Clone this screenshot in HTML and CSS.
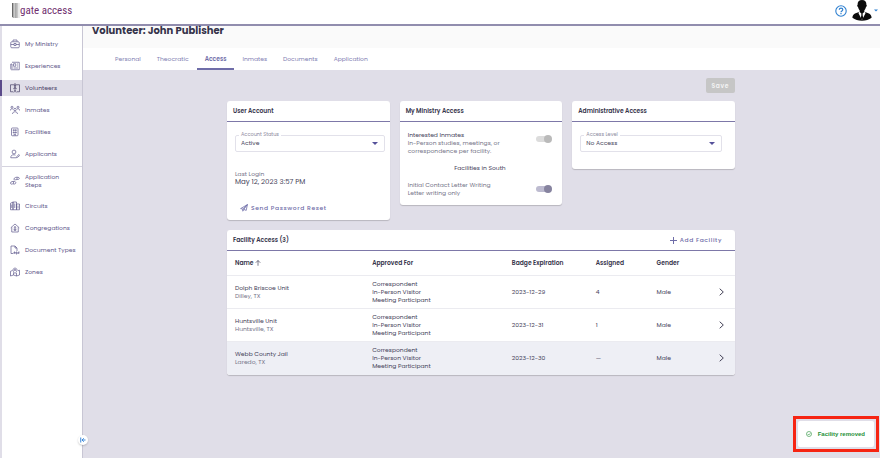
FILE: index.html
```html
<!DOCTYPE html>
<html lang="en">
<head>
<meta charset="utf-8">
<meta name="viewport" content="width=device-width, initial-scale=1">
<title>Gate Access – Volunteer</title>
<link rel="stylesheet" href="styles.css">
</head>
<body>
<header class="topbar">
  <a class="brand" href="#">
    <svg class="brand-bars" viewBox="0 0 9 17" aria-hidden="true">
      <path fill="#555" d="M0 0h1v16H0z"/><path fill="#888" d="M1.500 0h.8v17h-.8z"/><path fill="#666" d="M3 0h1v17H3z"/><path fill="#999" d="M4.500 0h.8v17h-.8z"/><path fill="#aaa" d="M6 0h.9v17H6z"/><path fill="#ccc" d="M7.500 0h.8v17h-.8z"/>
    </svg>
    <span class="brand-name">gate access</span>
  </a>
  <div class="account">
    <button class="plain" type="button" aria-label="Help">
      <svg class="help-icon" viewBox="0 0 12 12" fill="none" stroke="#2f80d0"><circle cx="6" cy="6" r="5.2" stroke-width="1.1"/><path stroke-width="1.2" d="M4.300 4.800C4.300 2.600 7.800 2.700 7.800 4.700 7.800 5.900 6 5.900 6 7.200M6 8.100v1.200"/></svg>
    </button>
    <button class="plain user" type="button" aria-label="Account menu">
      <svg class="avatar" viewBox="0 0 20 21"><path fill="#0b0b0b" d="M10 0c3 0 4.600 2 4.400 4.800.7.200.5 2-.4 2.300-.4 1.600-1 2.700-1.700 3.400v1.200l4.700 1.900c1.600.7 2.600 2.400 2.600 4.200-2.600 2-5.800 2.900-9.600 2.900s-7-.9-9.600-2.900c0-1.800 1-3.500 2.600-4.200l4.700-1.900v-1.200C7 9.800 6.400 8.700 6 7.100c-.9-.3-1.100-2.100-.4-2.300C5.400 2 7 0 10 0z"/><path fill="#fff" d="M7.400 11.800 10 14l2.600-2.200 1 1.100L10 20l-3.600-7.100z"/><path fill="#0b0b0b" d="M9.200 13.600h1.600l-.2 1.300.6 3.200L10 20l-1.200-1.900.6-3.200z"/></svg>
      <svg class="user-caret" viewBox="0 0 4 3"><path fill="#2f80d0" d="M0 .4h4L2 2.600z"/></svg>
    </button>
  </div>
</header>

<div class="shell">
  <nav class="sidebar" aria-label="Main">
    <ul class="nav-group">
      <li><a class="nav-link" href="#"><svg class="nav-icon" viewBox="0 0 20 20"><rect x="1.500" y="5.500" width="17" height="12" rx="2"/><path d="M6 5V2h8v3M1.500 11H8m4 0h6.500M8 9h4v4H8z"/></svg>My Ministry</a></li>
      <li><a class="nav-link" href="#"><svg class="nav-icon" viewBox="0 0 20 20"><path d="M4 2.500h14.500v15H3c-1 0-1.500-1-1.500-2V6H4v10M7 5.500h4.500v5H7zM14 6h2m-2 4h2m-9 4h9"/></svg>Experiences</a></li>
      <li><a class="nav-link active" aria-current="page" href="#"><svg class="nav-icon" viewBox="0 0 20 20"><path d="M7 3.500H1v14h5m7-14h6v14h-5M8 2h4v3H8z"/><circle cx="10" cy="8" r="1.500"/><path d="M6.500 11.500 10 10l3.500 1.500M10 10v4l-2.500 5m2.500-5 2.500 5"/></svg>Volunteers</a></li>
      <li><a class="nav-link" href="#"><svg class="nav-icon" viewBox="0 0 20 20"><circle cx="10" cy="9" r="2.500"/><circle cx="4" cy="4.500" r="2"/><circle cx="16" cy="4.500" r="2"/><path d="M5 18c0-6 10-6 10 0M.7 11c0-3 2-4 5-3M19.300 11c0-3-2-4-5-3"/></svg>Inmates</a></li>
      <li><a class="nav-link" href="#"><svg class="nav-icon" viewBox="0 0 20 20"><rect x="3" y="2" width="13" height="15.500" rx="1.500"/><path d="M6.500 5.500h2v2h-2zm4 0h2v2h-2zm-4 4.500h2v2h-2zm4 0h2v2h-2zM8 17v-2.500h3V17"/></svg>Facilities</a></li>
      <li><a class="nav-link" href="#"><svg class="nav-icon" viewBox="0 0 20 20"><circle cx="8" cy="6" r="3.800"/><path d="M12 17.500H1.500c0-4 2-6 6.500-6l3 .8M13 17.500l.5-2.500 4.500-4 1.500 1.800-4.500 4z"/></svg>Applicants</a></li>
    </ul>
    <ul class="nav-group">
      <li><a class="nav-link tall" href="#"><svg class="nav-icon" viewBox="0 0 20 20"><path d="M8 6c0-3 5-4 8-3.500s3.500 3 1.500 4C15 7.500 13 6.500 11 7.500S8 8 8 6zM14 2.500v4M1 14c0-3 5-3.500 8-3s3.500 3 1.500 4.500S6 15 4 16s-3-.5-3-2zM7 11v4.500"/></svg>Application Steps</a></li>
      <li><a class="nav-link" href="#"><svg class="nav-icon" viewBox="0 0 20 20"><path d="M1 4.500 6 2v15.500H1zM6 2h7v15.500H6zm7 4h6v11.500h-6zM9.500 5v9M3.500 7v7M16 9v6"/></svg>Circuits</a></li>
      <li><a class="nav-link" href="#"><svg class="nav-icon" viewBox="0 0 20 20"><path d="M1.500 9.500 10 2l8.500 7.500M3.500 8.500V18h13V8.500"/><circle cx="10" cy="8.500" r="1.500"/><path d="M7 12.500h6M10 10.500v3L8 16m2-2.500 2 2.500"/></svg>Congregations</a></li>
      <li><a class="nav-link" href="#"><svg class="nav-icon" viewBox="0 0 20 20"><path d="M6 17H2V2h8l4 4v6M10 2v4h4M8 18v-4h2v2H8m4-2v4h2v-4zm7 0h-2.500v4m0-2H19"/></svg>Document Types</a></li>
      <li><a class="nav-link" href="#"><svg class="nav-icon" viewBox="0 0 20 20"><path d="M5 7 1 8.500V18l6-2 6 2 6-2V6.500l-3 1M7 11v5m6-4v6"/><path d="M10 13C7 9.500 6 8 6 6c0-5 8-5 8 0 0 2-1 3.500-4 7z"/><circle cx="10" cy="6" r="1.300"/></svg>Zones</a></li>
    </ul>
    <button class="collapse" type="button" aria-label="Collapse sidebar">
      <svg class="collapse-icon" viewBox="0 0 12 12" fill="none" stroke="#3a86d8" stroke-width="2"><path d="M1.500 1v10M11 6H4.500M7.500 2.500 4 6l3.500 3.500"/></svg>
    </button>
  </nav>

  <main class="main">
    <h1 class="page-title">Volunteer: John Publisher</h1>
    <nav class="tabs" aria-label="Volunteer sections">
      <a class="tab" href="#">Personal</a>
      <a class="tab" href="#">Theocratic</a>
      <a class="tab current" aria-current="page" href="#">Access</a>
      <a class="tab" href="#">Inmates</a>
      <a class="tab" href="#">Documents</a>
      <a class="tab" href="#">Application</a>
    </nav>

    <div class="content">
      <div class="actions"><button class="save" type="button" disabled>Save</button></div>

      <div class="cards">
        <section class="card">
          <h2 class="card-head">User Account</h2>
          <div class="card-body account-body">
            <div class="field">
              <label class="field-label" for="status">Account Status</label>
              <select class="select" id="status"><option>Active</option><option>Inactive</option></select>
              <svg class="select-caret" viewBox="0 0 6 3" aria-hidden="true"><path d="M0 0h6L3 3z"/></svg>
            </div>
            <div class="login">
              <div class="muted">Last Login</div>
              <div class="login-time">May 12, 2023 3:57 PM</div>
            </div>
            <button class="plain link-button" type="button">
              <svg class="send-icon" viewBox="0 0 20 20" fill="none" stroke="currentColor" stroke-width="2" stroke-linejoin="round"><path d="M1.500 11.500 18.500 1.500 15.500 16 9.500 13.500 7 18v-5.500zM7 12.500 18.500 1.500l-9 12"/></svg>
              Send Password Reset
            </button>
          </div>
        </section>

        <section class="card">
          <h2 class="card-head">My Ministry Access</h2>
          <div class="card-body ministry-body">
            <div class="switch-row">
              <label for="interested"><span class="strong-label">Interested Inmates</span><span class="muted hint">In-Person studies, meetings, or correspondence per facility.</span></label>
              <input class="switch" id="interested" type="checkbox" role="switch" checked disabled>
            </div>
            <p class="group-name">Facilities in South</p>
            <div class="switch-row">
              <label for="letters"><span class="muted hint">Initial Contact Letter Writing</span><span class="muted hint">Letter writing only</span></label>
              <input class="switch" id="letters" type="checkbox" role="switch" checked>
            </div>
          </div>
        </section>

        <section class="card">
          <h2 class="card-head">Administrative Access</h2>
          <div class="card-body admin-body">
            <div class="field">
              <label class="field-label" for="level">Access Level</label>
              <select class="select" id="level"><option>No Access</option><option>Administrator</option></select>
              <svg class="select-caret" viewBox="0 0 6 3" aria-hidden="true"><path d="M0 0h6L3 3z"/></svg>
            </div>
          </div>
        </section>
      </div>

      <section class="card">
        <div class="card-head">
          <h2 class="card-title">Facility Access (3)</h2>
          <button class="plain link-button" type="button">
            <svg class="plus-icon" viewBox="0 0 7 7" fill="none" stroke="currentColor"><path d="M3.500 0v7M0 3.500h7"/></svg>
            Add Facility
          </button>
        </div>
        <table class="facilities">
          <colgroup><col class="col-name"><col class="col-approved"><col class="col-badge"><col class="col-assigned"><col class="col-gender"><col></colgroup>
          <thead>
            <tr><th>Name <svg class="sort-icon" viewBox="0 0 12 12" fill="none" stroke="currentColor" stroke-width="1.300"><path d="M6 11.500V1M1.500 5.500 6 1l4.500 4.500"/></svg></th><th>Approved For</th><th>Badge Expiration</th><th>Assigned</th><th>Gender</th><th></th></tr>
          </thead>
          <tbody>
            <tr><td>Dolph Briscoe Unit<div class="muted">Dilley, TX</div></td><td>Correspondent<br>In-Person Visitor<br>Meeting Participant</td><td>2023-12-29</td><td>4</td><td>Male</td><td class="open"><svg class="chevron" viewBox="0 0 5 8"><path d="M.7.700 4.300 4 .7 7.300"/></svg></td></tr>
            <tr><td>Huntsville Unit<div class="muted">Huntsville, TX</div></td><td>Correspondent<br>In-Person Visitor<br>Meeting Participant</td><td>2023-12-31</td><td>1</td><td>Male</td><td class="open"><svg class="chevron" viewBox="0 0 5 8"><path d="M.7.700 4.300 4 .7 7.300"/></svg></td></tr>
            <tr class="highlight"><td>Webb County Jail<div class="muted">Laredo, TX</div></td><td>Correspondent<br>In-Person Visitor<br>Meeting Participant</td><td>2023-12-30</td><td>—</td><td>Male</td><td class="open"><svg class="chevron" viewBox="0 0 5 8"><path d="M.7.700 4.300 4 .7 7.300"/></svg></td></tr>
          </tbody>
        </table>
      </section>
    </div>
  </main>
</div>

<div class="toast-frame">
  <div class="toast" role="status">
    <svg class="check-icon" viewBox="0 0 12 12" fill="none" stroke="currentColor" stroke-width="1.200"><circle cx="6" cy="6" r="5"/><path d="m3.500 6 2 2 3.200-3.500"/></svg>
    Facility removed
  </div>
</div>
</body>
</html>
```

FILE: styles.css
```css
:root {
  --ink: #45435a;
  --heading: #35334a;
  --muted: #77768a;
  --nav: #5f598c;
  --accent: #6f6da8;
  --rule: #7d78a8;
  --canvas: #e0dee8;
}

* { box-sizing: border-box; }

body {
  margin: 0;
  min-height: 100vh;
  display: flex;
  flex-direction: column;
  background: var(--canvas);
  color: var(--ink);
  font: 6px/8px Poppins, Inter, "Open Sans", sans-serif;
}

h1, h2, p, ul { margin: 0; padding: 0; }
ul { list-style: none; }
a { color: inherit; text-decoration: none; }
button, select { font: inherit; color: inherit; }
svg { flex: none; }

.plain {
  display: flex;
  align-items: center;
  padding: 0;
  border: 0;
  background: none;
}

.topbar {
  height: 26px;
  padding: 0 2px 3px 12px;
  display: flex;
  align-items: center;
  justify-content: space-between;
  background: #fff;
  border-bottom: 2px solid #918dae;
}

.brand { display: flex; align-items: center; height: 20px; }
.brand-bars { width: 8px; height: 17px; }
.brand-name {
  color: #70306f;
  font: 11px/16px "Liberation Sans Narrow", "Roboto Condensed", "DejaVu Sans Condensed", sans-serif;
}

.account { display: flex; align-items: center; gap: 5px; }
.help-icon { width: 12px; height: 12px; }
.user { gap: 2px; }
.avatar { width: 20px; height: 21px; }
.user-caret { width: 4px; height: 3px; }

.shell { flex: 1; display: flex; }

.sidebar {
  position: relative;
  flex: none;
  width: 82px;
  padding-top: 7px;
  background: #fff;
  border-left: 2px solid var(--canvas);
  box-shadow: 1px 0 #c8c6d4;
}

.nav-group:first-child { padding-bottom: 1px; }
.nav-group + .nav-group { border-top: 1px solid #d5d3df; }

.nav-link {
  display: flex;
  align-items: center;
  gap: 5px;
  height: 22px;
  padding: 3px 2px 3px 8px;
  color: var(--nav);
}

.nav-link.tall { height: 28px; padding-right: 20px; }
.nav-link.active {
  background: var(--canvas);
  box-shadow: -2px 0 #5b4a8a;
  color: #474066;
  height: 16px;
  margin: 3px 0;
}

.nav-icon {
  width: 10px;
  height: 10px;
  fill: none;
  stroke: currentColor;
  stroke-width: 1.4;
}

.collapse {
  position: absolute;
  right: -6px;
  bottom: 13px;
  width: 10px;
  height: 10px;
  display: grid;
  place-items: center;
  padding: 0;
  border: 0;
  border-radius: 50%;
  background: #fff;
  box-shadow: 0 1px 2px #0003;
}
.collapse-icon { width: 6px; height: 6px; }

.main { flex: 1; min-width: 0; }

.page-title {
  padding: 0 10px 12px;
  background: #fafafa;
  color: var(--heading);
  font-size: 10px;
  font-weight: 700;
  line-height: 10px;
}

.tabs { display: flex; padding-left: 25px; background: #fff; }
.tab {
  padding: 7px 8px 5px;
  border-bottom: 2px solid transparent;
  color: #8280b3;
}
.tab.current { border-color: var(--accent); color: var(--accent); font-weight: 600; }

.content {
  max-width: 524px;
  margin: 0 auto;
  padding: 8px 8px 40px;
}

.actions { display: flex; justify-content: flex-end; margin-bottom: 8px; }
.save {
  padding: 4px 6px 3px;
  border: 0;
  border-radius: 2px;
  background: #c6c6c6;
  color: #f4f4f4;
  font-weight: 600;
  letter-spacing: 0.1em;
}

.cards {
  display: grid;
  grid-template-columns: repeat(3, 1fr);
  gap: 10px;
  align-items: start;
  margin-bottom: 10px;
}

.card {
  background: #fff;
  border-radius: 3px;
  box-shadow: 0 1px 1px #0000002e;
  overflow: hidden;
}

.card-head {
  display: flex;
  align-items: center;
  justify-content: space-between;
  height: 21px;
  padding: 0 13px 0 6px;
  border-bottom: 1px solid var(--rule);
  color: var(--heading);
  font-size: 6px;
  font-weight: 600;
}
.card-title { font-size: 6px; font-weight: 600; }

.account-body { padding: 13px 5px 8px 8px; }
.admin-body { padding: 13px 13px 17px 8px; }
.ministry-body { padding: 9px 10px 8px 8px; }

.field { position: relative; }
.field-label {
  position: absolute;
  top: -4px;
  left: 4px;
  padding: 0 2px;
  background: #fff;
  color: #8c8a9e;
  font-size: 5px;
}
.select {
  display: block;
  width: 100%;
  height: 17px;
  padding: 0 5px 1px;
  appearance: none;
  border: 1px solid #e2e1ea;
  border-radius: 2px;
  background: #fff;
}
.select-caret {
  position: absolute;
  top: 7px;
  right: 7px;
  width: 6px;
  height: 3px;
  fill: #55519a;
  pointer-events: none;
}

.muted { color: var(--muted); }
.login { margin: 18px 0; }
.login-time { font-size: 7px; }
.link-button {
  gap: 3px;
  color: var(--accent);
  font-weight: 500;
  letter-spacing: 0.1em;
}
.account-body .link-button { padding-left: 5px; }
.send-icon { width: 8px; height: 8px; }
.plus-icon { width: 7px; height: 7px; }

.switch-row { display: flex; justify-content: space-between; align-items: flex-start; gap: 16px; }
.strong-label, .hint { display: block; }
.group-name { margin: 9px 0; text-align: center; }

.switch {
  flex: none;
  position: relative;
  width: 16px;
  height: 8px;
  margin: 4px 0 0;
  appearance: none;
}
.switch::before {
  content: "";
  position: absolute;
  inset: 1px 2px 1px 0;
  border-radius: 3px;
  background: #bdbbd0;
}
.switch::after {
  content: "";
  position: absolute;
  right: 0;
  top: 0;
  width: 8px;
  height: 8px;
  border-radius: 50%;
  background: #86839f;
}
.switch:disabled::before { background: #dcdcdc; }
.switch:disabled::after { background: #bababa; }

.facilities {
  width: 100%;
  table-layout: fixed;
  border-collapse: collapse;
  text-align: left;
}
.facilities th { height: 24px; padding: 0 8px; color: var(--heading); font-weight: 600; }
.facilities td { padding: 4px 8px; }
.facilities tbody tr { border-top: 1px solid #ebebf0; }
.highlight { background: #eeeff5; }
.facilities .highlight td { padding-bottom: 5px; }
.col-name { width: 27%; }
.col-approved { width: 27.5%; }
.col-badge { width: 16.5%; }
.col-assigned { width: 12%; }
.col-gender { width: 10%; }
.facilities .open { text-align: right; padding-right: 11px; }
.sort-icon { width: 6px; height: 6px; vertical-align: middle; }
.chevron {
  width: 5px;
  height: 8px;
  vertical-align: middle;
  fill: none;
  stroke: #454358;
}

.toast-frame {
  position: fixed;
  right: 1px;
  bottom: 6px;
  padding: 2px;
  border: 3px solid #f62412;
  background: var(--canvas);
}
.toast {
  display: flex;
  align-items: center;
  gap: 6px;
  padding: 9px 9px 9px 8px;
  border-radius: 2px;
  background: #fff;
  color: #259038;
  font-family: "Liberation Sans", Arial, sans-serif;
  font-weight: 700;
}
.check-icon { width: 6px; height: 6px; }
```
